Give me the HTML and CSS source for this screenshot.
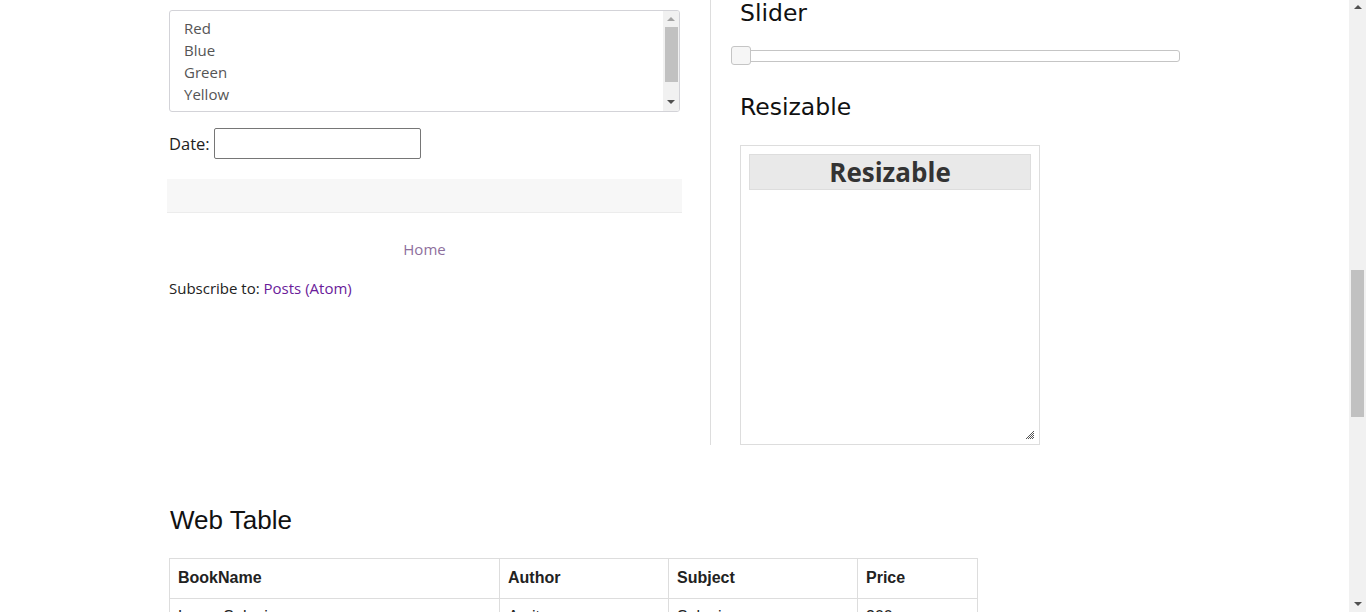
FILE: index.html
```html
<!DOCTYPE html>
<html>
<head>
<meta charset="utf-8">
<title>Practice page</title>
<link rel="stylesheet" href="styles.css">
</head>
<body>
<div class="viewport">
  <div class="page">
    <div class="cols">
      <div class="col-left">
        <div class="listbox">
          <ul class="options">
            <li>Red</li>
            <li>Blue</li>
            <li>Green</li>
            <li>Yellow</li>
            <li>Red</li>
          </ul>
          <div class="mini-scroll">
            <span class="arr up"></span>
            <div class="mini-track"><div class="mini-thumb"></div></div>
            <span class="arr down"></span>
          </div>
        </div>
        <div class="date-row">
          <label class="date-label">Date:</label>
          <span class="date-input"></span>
        </div>
        <div class="graybar"></div>
        <div class="home-row"><a class="home-link">Home</a></div>
        <div class="subscribe">Subscribe to: <a class="atom">Posts (Atom)</a></div>
      </div>
      <div class="col-right">
        <h2 class="rh rh-first">Slider</h2>
        <div class="slider">
          <span class="handle"></span>
        </div>
        <h2 class="rh rh-second">Resizable</h2>
        <div class="resizable">
          <h3 class="res-head">Resizable</h3>
          <svg class="grip" width="8" height="8" viewBox="0 0 8 8">
            <g fill="#555">
              <rect x="7" y="0" width="1" height="1"/>
              <rect x="6" y="1" width="1" height="1"/>
              <rect x="5" y="2" width="1" height="1"/><rect x="7" y="2" width="1" height="1"/>
              <rect x="4" y="3" width="1" height="1"/><rect x="6" y="3" width="1" height="1"/>
              <rect x="3" y="4" width="1" height="1"/><rect x="5" y="4" width="1" height="1"/><rect x="7" y="4" width="1" height="1"/>
              <rect x="2" y="5" width="1" height="1"/><rect x="4" y="5" width="1" height="1"/><rect x="6" y="5" width="1" height="1"/>
              <rect x="1" y="6" width="1" height="1"/><rect x="3" y="6" width="1" height="1"/><rect x="5" y="6" width="1" height="1"/><rect x="7" y="6" width="1" height="1"/>
              <rect x="0" y="7" width="1" height="1"/><rect x="2" y="7" width="1" height="1"/><rect x="4" y="7" width="1" height="1"/><rect x="6" y="7" width="1" height="1"/>
            </g>
          </svg>
        </div>
      </div>
    </div>
    <div class="table-section">
      <h2 class="wt-title">Web Table</h2>
      <table class="webtable">
        <tr><th class="c1">BookName</th><th class="c2">Author</th><th class="c3">Subject</th><th class="c4">Price</th></tr>
        <tr><td>Learn Selenium</td><td>Amit</td><td>Selenium</td><td>300</td></tr>
        <tr><td>Learn Java</td><td>Mukesh</td><td>Java</td><td>500</td></tr>
      </table>
    </div>
  </div>
  <div class="scrollbar">
    <span class="sarr sup"></span>
    <div class="strack"><div class="sthumb"></div></div>
    <span class="sarr sdown"></span>
  </div>
</div>
</body>
</html>
```
FILE: styles.css
```css
html, body {
  margin: 0;
  padding: 0;
  height: 100%;
  overflow: hidden;
  background: #fff;
}
body {
  font-family: "Open Sans", "Noto Sans", sans-serif;
  color: #222;
}
.viewport {
  display: flex;
  height: 612px;
  width: 1366px;
}
.page {
  flex: 1;
  overflow: hidden;
  padding-left: 167px;
}
.cols {
  display: flex;
  align-items: flex-start;
}
.col-left {
  width: 515px;
  margin-right: 28px;
  padding-top: 10px;
}
.listbox {
  margin-left: 2px;
  width: 509px;
  height: 100px;
  border: 1px solid #d3d3d8;
  border-radius: 3px;
  display: flex;
  overflow: hidden;
}
.options {
  flex: 1;
  list-style: none;
  margin: 0;
  padding: 6px 0 0 14px;
  font-size: 15px;
  line-height: 22px;
  color: #555;
}
.mini-scroll {
  width: 16px;
  background: #f1f1f1;
  display: flex;
  flex-direction: column;
  align-items: center;
}
.arr {
  width: 0;
  height: 0;
  border-left: 4px solid transparent;
  border-right: 4px solid transparent;
}
.arr.up {
  border-bottom: 4px solid #a3a3a3;
  margin: 6px 0 6px;
}
.arr.down {
  border-top: 4px solid #505050;
  margin: 4px 0 7px;
}
.mini-track {
  flex: 1;
  width: 100%;
  display: flex;
  justify-content: center;
}
.mini-thumb {
  width: 13px;
  height: 55px;
  background: #c1c1c1;
}
.date-row {
  display: flex;
  align-items: center;
  margin-top: 16px;
  margin-left: 2px;
  font-size: 16.5px;
}
.date-label {
  margin-right: 4px;
}
.date-input {
  display: block;
  width: 205px;
  height: 29px;
  border: 1px solid #767676;
  border-radius: 2px;
}
.graybar {
  margin-top: 20px;
  height: 33px;
  background: #f7f7f7;
  border-bottom: 1px solid #ececec;
}
.home-row {
  text-align: center;
  margin-top: 25px;
  font-size: 15px;
  line-height: 22px;
}
.home-link {
  color: #8e6f9d;
}
.subscribe {
  margin-top: 17px;
  margin-left: 2px;
  font-size: 15px;
  line-height: 22px;
  color: #222;
}
.atom {
  color: #6a1b9a;
}
.col-right {
  border-left: 1px solid #ddd;
  padding-left: 29px;
  width: 440px;
}
.rh {
  margin: 0;
  font-family: "DejaVu Sans", Verdana, sans-serif;
  font-weight: normal;
  font-size: 23.5px;
  line-height: 30px;
  color: #111;
}
.rh-first {
  margin-top: -2px;
}
.slider {
  position: relative;
  margin-top: 22px;
  height: 10px;
  border: 1px solid #c5c5c5;
  border-radius: 3px;
  background: #fff;
}
.handle {
  position: absolute;
  left: -10px;
  top: -5px;
  width: 18px;
  height: 17px;
  background: #f6f6f6;
  border: 1px solid #c5c5c5;
  border-radius: 3px;
}
.rh-second {
  margin-top: 30px;
}
.resizable {
  position: relative;
  margin-top: 23px;
  border: 1px solid #ddd;
  padding: 8px;
  box-sizing: border-box;
  width: 300px;
  height: 300px;
}
.res-head {
  margin: 0;
  height: 34px;
  background: #e9e9e9;
  border: 1px solid #dddddd;
  text-align: center;
  font-size: 26px;
  font-weight: bold;
  line-height: 34px;
  color: #333;
}
.grip {
  position: absolute;
  right: 5px;
  bottom: 5px;
}
.table-section {
  padding-left: 2px;
}
.wt-title {
  margin: 60px 0 0 1px;
  font-family: "Liberation Sans", Arial, sans-serif;
  font-weight: normal;
  font-size: 26px;
  line-height: 30px;
  color: #111;
}
.webtable {
  margin-top: 23px;
  border-collapse: collapse;
  font-family: "Liberation Sans", Arial, sans-serif;
  font-size: 16px;
  color: #222;
}
.webtable th, .webtable td {
  border: 1px solid #dddddd;
  text-align: left;
  padding: 9px 8px 8px;
  line-height: 18px;
}
.webtable th {
  font-weight: bold;
  height: 21px;
  padding: 8px 8px 10px;
}
.c1 { width: 313px; }
.c2 { width: 152px; }
.c3 { width: 172px; }
.c4 { width: 103px; }
.scrollbar {
  width: 17px;
  background: #f1f1f1;
  display: flex;
  flex-direction: column;
  align-items: center;
}
.sarr {
  width: 0;
  height: 0;
  border-left: 4px solid transparent;
  border-right: 4px solid transparent;
}
.sup {
  border-bottom: 4px solid #505050;
  margin-top: 5px;
}
.sdown {
  border-top: 4px solid #505050;
  margin-bottom: 6px;
}
.strack {
  flex: 1;
  width: 100%;
  display: flex;
  justify-content: center;
  padding-top: 261px;
}
.sthumb {
  width: 13px;
  height: 147px;
  background: #c1c1c1;
}
```
